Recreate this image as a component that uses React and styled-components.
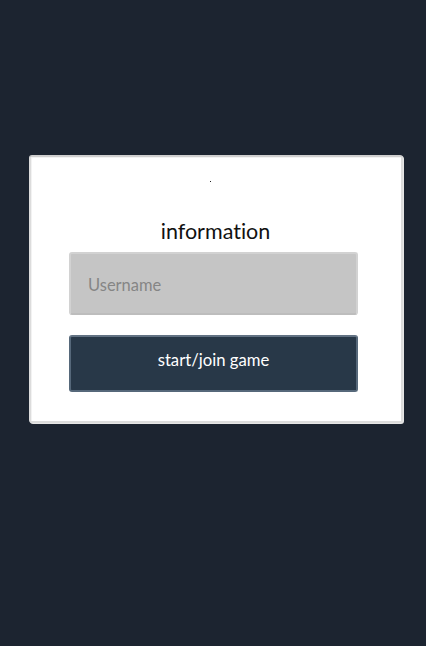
import React from "react";
import styled, { createGlobalStyle } from "styled-components";

const GlobalStyle = createGlobalStyle`
  html, body {
    margin: 0;
    padding: 0;
    background: #1c2430;
    font-family: Lato, "Open Sans", sans-serif;
    font-variant-ligatures: none;
  }
`;

export default function App() {
  return (
    <StyledPage>
      <GlobalStyle />
      <StyledCard>
        <StyledDot />
        <StyledTitle>information</StyledTitle>
        <StyledInput placeholder="Username" />
        <StyledButton>start/join game</StyledButton>
      </StyledCard>
    </StyledPage>
  );
}

// ====================================================================
//                              STYLES
// ====================================================================

const StyledPage = styled.div`
  height: 646px;
  box-sizing: border-box;
  padding: 155px 0 0 29px;
`;

const StyledCard = styled.div`
  width: 374px;
  height: 268px;
  box-sizing: border-box;
  background: #fff;
  border: 2px solid #dcdcdc;
  border-top-color: #cfcfcf;
  border-radius: 3px;
  box-shadow: inset 1px 1px 0 #f2f2f2, 1px 1px 0 #e6e6e6;
  padding: 24px 43px 0 38px;
  display: flex;
  flex-direction: column;
  align-items: stretch;
`;

const StyledDot = styled.div`
  width: 1px;
  height: 1px;
  background: #222;
  align-self: center;
  margin-left: -6px;
`;

const StyledTitle = styled.h2`
  margin: 36px 0 0;
  font-size: 21.5px;
  font-weight: 400;
  line-height: 26px;
  color: #111;
  text-align: center;
  padding-left: 4px;
  font-variant-ligatures: none;
`;

const StyledInput = styled.input`
  margin-top: 8px;
  height: 63px;
  box-sizing: border-box;
  background: #c5c5c5;
  border: 2px solid #d2d2d2;
  border-bottom-color: #bdbdbd;
  border-radius: 3px;
  padding: 2px 0 0 17px;
  font-family: inherit;
  font-size: 16.5px;
  color: #333;
  outline: none;

  &::placeholder {
    color: #858585;
  }
`;

const StyledButton = styled.button`
  margin-top: 20px;
  height: 57px;
  box-sizing: border-box;
  background: #283848;
  border: 2px solid #56687a;
  border-top-color: #627283;
  border-radius: 3px;
  color: #fff;
  font-family: inherit;
  font-size: 16.7px;
  cursor: pointer;
  padding: 0 0 8px;
`;
